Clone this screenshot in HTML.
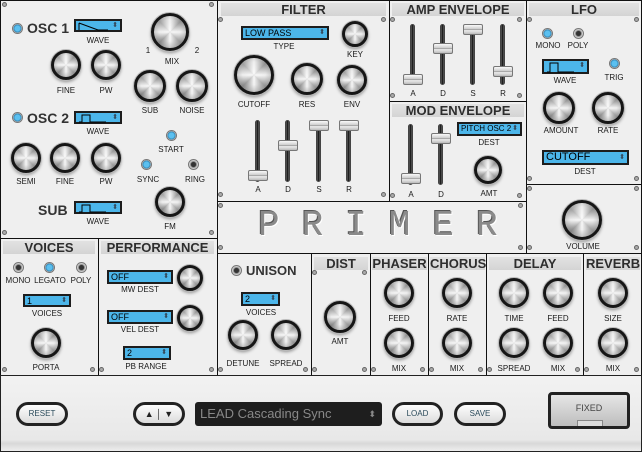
<!DOCTYPE html>
<html><head><meta charset="utf-8">
<style>
*{margin:0;padding:0;box-sizing:border-box}
body{width:642px;height:452px;background:#111;position:relative;overflow:hidden;font-family:"Liberation Sans",Arial,sans-serif}
.p{position:absolute;background:#efefef;border:1px solid #111}
.h{position:absolute;height:13px;background:linear-gradient(#e2e2e2,#d4d4d4);font-weight:bold;font-size:13px;color:#2e2e2e;text-align:center;line-height:13px}
.l{position:absolute;font-size:8px;color:#1a1a1a;transform:translateX(-50%);white-space:nowrap;line-height:9px}
.k{position:absolute;border-radius:50%;border:3px solid #161616;background:radial-gradient(circle at 50% 45%,rgba(255,255,255,.85) 0,rgba(255,255,255,.15) 45%,rgba(0,0,0,.25) 85%),conic-gradient(#eee,#8f8f8f,#eee,#a0a0a0,#f2f2f2,#909090,#eee,#a0a0a0,#eee);box-shadow:0 0 0 1px #bbb,0 2px 3px rgba(0,0,0,.4)}
.s{position:absolute;background:linear-gradient(90deg,#666,#111,#666);width:5px;border-radius:3px;border:1px solid #444}
.hd{position:absolute;width:20px;height:11px;border-radius:2px;background:linear-gradient(#fafafa,#ccc 45%,#888 50%,#eee 60%,#bbb);border:1px solid #777}
.b{position:absolute;background:#4cb6ea;border:2px solid #1d1d1d;font-size:9px;color:#000;line-height:10px;padding-left:2px}
.b:after{content:"⬍";position:absolute;right:2px;top:0;font-size:7px;color:#345}
.led{position:absolute;width:11px;height:11px;border-radius:50%;background:radial-gradient(circle,#5bc0f0 40%,#2a7fb0 60%,#ccc 65%,#888);border:1px solid #777}
.off{background:radial-gradient(circle,#333 35%,#888 45%,#ddd 65%,#888)}
.sc{position:absolute;width:5px;height:5px;border-radius:50%;background:#aaa;border:1px solid #666}
.btn{position:absolute;border:3px solid #222;border-radius:12px;background:linear-gradient(#fdfdfd,#dcdcdc);font-size:8px;color:#2a4a5a;text-align:center;line-height:18px}
</style></head><body>
<div class="p" style="left:0;top:0;width:218px;height:239px"></div>
<div class="p" style="left:217px;top:0;width:173px;height:202px"></div>
<div class="p" style="left:389px;top:0;width:138px;height:102px"></div>
<div class="p" style="left:389px;top:101px;width:138px;height:101px"></div>
<div class="p" style="left:526px;top:0;width:116px;height:185px"></div>
<div class="p" style="left:526px;top:184px;width:116px;height:70px"></div>
<div class="p" style="left:217px;top:201px;width:310px;height:53px"></div>
<div class="p" style="left:0;top:238px;width:99px;height:138px"></div>
<div class="p" style="left:98px;top:238px;width:120px;height:138px"></div>
<div class="p" style="left:217px;top:253px;width:95px;height:123px"></div>
<div class="p" style="left:311px;top:253px;width:60px;height:123px"></div>
<div class="p" style="left:370px;top:253px;width:59px;height:123px"></div>
<div class="p" style="left:428px;top:253px;width:59px;height:123px"></div>
<div class="p" style="left:486px;top:253px;width:98px;height:123px"></div>
<div class="p" style="left:583px;top:253px;width:59px;height:123px"></div>
<div style="position:absolute;left:0;top:375px;width:642px;height:77px;background:linear-gradient(#f2f2f2,#e8e8e8 85%,#d8d8d8 90%,#eee);border:1px solid #222"></div>

<div class="h" style="left:221px;top:3px;width:165px">FILTER</div>
<div class="h" style="left:392px;top:3px;width:132px">AMP ENVELOPE</div>
<div class="h" style="left:392px;top:104px;width:132px">MOD ENVELOPE</div>
<div class="h" style="left:529px;top:3px;width:110px">LFO</div>
<div class="h" style="left:3px;top:241px;width:92px">VOICES</div>
<div class="h" style="left:101px;top:241px;width:113px">PERFORMANCE</div>
<div class="h" style="left:314px;top:257px;width:54px">DIST</div>
<div class="h" style="left:372px;top:257px;width:55px">PHASER</div>
<div class="h" style="left:430px;top:257px;width:55px">CHORUS</div>
<div class="h" style="left:489px;top:257px;width:92px">DELAY</div>
<div class="h" style="left:586px;top:257px;width:54px">REVERB</div>

<div style="position:absolute;left:27px;top:20px;font-weight:bold;font-size:14px;color:#333">OSC 1</div>
<div style="position:absolute;left:27px;top:110px;font-weight:bold;font-size:14px;color:#333">OSC 2</div>
<div style="position:absolute;left:38px;top:202px;font-weight:bold;font-size:14px;color:#333">SUB</div>
<div style="position:absolute;left:246px;top:263px;font-weight:bold;font-size:13px;color:#333">UNISON</div>

<div class="b" style="left:74px;top:19px;width:48px;height:13px"><svg width="30" height="9" style="position:absolute;left:2px;top:1px"><path d="M1 1 L1 8 M1 1 L20 8 L30 8" stroke="#000" fill="none"/></svg></div>
<div class="b" style="left:74px;top:111px;width:48px;height:13px"><svg width="30" height="9" style="position:absolute;left:2px;top:1px"><path d="M1 8 L4 8 L4 1 L12 1 L12 8 L28 8" stroke="#000" fill="none"/></svg></div>
<div class="b" style="left:74px;top:201px;width:48px;height:13px"><svg width="30" height="9" style="position:absolute;left:2px;top:1px"><path d="M1 8 L4 8 L4 1 L12 1 L12 8 L28 8" stroke="#000" fill="none"/></svg></div>
<div class="b" style="left:542px;top:59px;width:47px;height:15px"><svg width="30" height="11" style="position:absolute;left:2px;top:1px"><path d="M1 10 L4 10 L4 1 L12 1 L12 10 L28 10" stroke="#000" fill="none"/></svg></div>
<div class="b" style="left:241px;top:26px;width:88px;height:14px">LOW PASS</div>
<div class="b" style="left:457px;top:122px;width:65px;height:14px;font-size:8px">PITCH OSC 2</div>
<div class="b" style="left:542px;top:150px;width:87px;height:15px;font-size:11px;line-height:11px">CUTOFF</div>
<div class="b" style="left:23px;top:294px;width:48px;height:13px">1</div>
<div class="b" style="left:107px;top:270px;width:66px;height:14px">OFF</div>
<div class="b" style="left:107px;top:310px;width:66px;height:14px">OFF</div>
<div class="b" style="left:123px;top:346px;width:48px;height:14px">2</div>
<div class="b" style="left:241px;top:292px;width:39px;height:14px">2</div>

<div class="l" style="left:98px;top:36px">WAVE</div>
<div class="l" style="left:98px;top:127px">WAVE</div>
<div class="l" style="left:98px;top:217px">WAVE</div>
<div class="l" style="left:66px;top:86px">FINE</div>
<div class="l" style="left:106px;top:86px">PW</div>
<div class="l" style="left:148px;top:46px">1</div>
<div class="l" style="left:197px;top:46px">2</div>
<div class="l" style="left:172px;top:57px">MIX</div>
<div class="l" style="left:150px;top:106px">SUB</div>
<div class="l" style="left:192px;top:106px">NOISE</div>
<div class="l" style="left:26px;top:177px">SEMI</div>
<div class="l" style="left:65px;top:177px">FINE</div>
<div class="l" style="left:106px;top:177px">PW</div>
<div class="l" style="left:171px;top:145px">START</div>
<div class="l" style="left:148px;top:175px">SYNC</div>
<div class="l" style="left:195px;top:175px">RING</div>
<div class="l" style="left:170px;top:222px">FM</div>
<div class="l" style="left:284px;top:42px">TYPE</div>
<div class="l" style="left:355px;top:50px">KEY</div>
<div class="l" style="left:254px;top:100px">CUTOFF</div>
<div class="l" style="left:307px;top:100px">RES</div>
<div class="l" style="left:352px;top:100px">ENV</div>
<div class="l" style="left:258px;top:185px">A</div><div class="l" style="left:288px;top:185px">D</div><div class="l" style="left:319px;top:185px">S</div><div class="l" style="left:349px;top:185px">R</div>
<div class="l" style="left:413px;top:89px">A</div><div class="l" style="left:443px;top:89px">D</div><div class="l" style="left:473px;top:89px">S</div><div class="l" style="left:503px;top:89px">R</div>
<div class="l" style="left:411px;top:190px">A</div><div class="l" style="left:441px;top:190px">D</div>
<div class="l" style="left:489px;top:138px">DEST</div>
<div class="l" style="left:489px;top:189px">AMT</div>
<div class="l" style="left:548px;top:41px">MONO</div>
<div class="l" style="left:578px;top:41px">POLY</div>
<div class="l" style="left:565px;top:76px">WAVE</div>
<div class="l" style="left:614px;top:73px">TRIG</div>
<div class="l" style="left:561px;top:126px">AMOUNT</div>
<div class="l" style="left:608px;top:126px">RATE</div>
<div class="l" style="left:585px;top:167px">DEST</div>
<div class="l" style="left:583px;top:242px">VOLUME</div>
<div class="l" style="left:18px;top:276px">MONO</div>
<div class="l" style="left:50px;top:276px">LEGATO</div>
<div class="l" style="left:81px;top:276px">POLY</div>
<div class="l" style="left:47px;top:309px">VOICES</div>
<div class="l" style="left:46px;top:363px">PORTA</div>
<div class="l" style="left:140px;top:285px">MW DEST</div>
<div class="l" style="left:140px;top:325px">VEL DEST</div>
<div class="l" style="left:146px;top:362px">PB RANGE</div>
<div class="l" style="left:261px;top:308px">VOICES</div>
<div class="l" style="left:243px;top:359px">DETUNE</div>
<div class="l" style="left:286px;top:359px">SPREAD</div>
<div class="l" style="left:340px;top:337px">AMT</div>
<div class="l" style="left:399px;top:314px">FEED</div><div class="l" style="left:399px;top:364px">MIX</div>
<div class="l" style="left:457px;top:314px">RATE</div><div class="l" style="left:457px;top:364px">MIX</div>
<div class="l" style="left:514px;top:314px">TIME</div><div class="l" style="left:558px;top:314px">FEED</div>
<div class="l" style="left:514px;top:364px">SPREAD</div><div class="l" style="left:558px;top:364px">MIX</div>
<div class="l" style="left:613px;top:314px">SIZE</div><div class="l" style="left:613px;top:364px">MIX</div>

<div style="position:absolute;left:258px;top:205px;font-family:'Liberation Mono',monospace;font-size:36px;letter-spacing:22px;color:#8a8a8a;text-shadow:1px 1px 0 #fff,-1px -1px 0 #555">PRIMER</div>

<div class="btn" style="left:16px;top:402px;width:52px;height:24px">RESET</div>
<div class="btn" style="left:133px;top:402px;width:52px;height:24px;font-size:9px;color:#222">▲ │ ▼</div>
<div style="position:absolute;left:195px;top:402px;width:187px;height:24px;background:#1e1e1e;border-radius:3px;color:#888;font-size:13px;line-height:24px;padding-left:5px">LEAD Cascading Sync<span style="position:absolute;right:6px;font-size:9px">⬍</span></div>
<div class="btn" style="left:392px;top:402px;width:51px;height:24px">LOAD</div>
<div class="btn" style="left:454px;top:402px;width:52px;height:24px">SAVE</div>
<div style="position:absolute;left:548px;top:392px;width:82px;height:37px;border:3px solid #222;border-radius:4px;background:linear-gradient(#e6e6e6,#bdbdbd);font-size:9px;color:#444;text-align:center;line-height:26px">FIXED<div style="position:absolute;left:26px;bottom:0;width:26px;height:6px;background:#ddd;border:1px solid #888;border-bottom:none"></div></div>

<script>
function K(cx,cy,d){var e=document.createElement('div');e.className='k';e.style.cssText='left:'+(cx-d/2)+'px;top:'+(cy-d/2)+'px;width:'+d+'px;height:'+d+'px';document.body.appendChild(e);}
[[66,65,30],[106,65,30],[170,32,38],[150,86,32],[192,86,32],[26,158,30],[65,158,30],[106,158,30],[170,202,30],
[254,75,40],[307,79,32],[352,80,30],[355,34,26],[488,170,28],[559,108,32],[608,108,32],[582,220,40],
[46,343,30],[190,278,26],[190,318,26],[243,335,30],[286,335,30],[340,317,32],
[399,293,30],[399,343,30],[457,293,30],[457,343,30],[514,293,30],[558,293,30],[514,343,30],[558,343,30],[613,293,30],[613,343,30]].forEach(function(k){K(k[0],k[1],k[2])});
function S(x,t,b,h){var e=document.createElement('div');e.className='s';e.style.cssText='left:'+(x-3)+'px;top:'+t+'px;height:'+(b-t)+'px';document.body.appendChild(e);var g=document.createElement('div');g.className='hd';g.style.cssText='left:'+(x-10)+'px;top:'+(h-5)+'px';document.body.appendChild(g);}
S(258,120,182,175);S(288,120,182,145);S(319,120,182,125);S(349,120,182,125);
S(413,24,85,79);S(443,24,85,48);S(473,24,85,29);S(503,24,85,71);
S(411,124,185,178);S(441,124,185,138);
function L(x,y,o){var e=document.createElement('div');e.className='led'+(o?' off':'');e.style.cssText='left:'+(x-5)+'px;top:'+(y-5)+'px';document.body.appendChild(e);}
L(17,28);L(17,117);L(171,135);L(146,164);L(193,164,1);L(547,33);L(578,33,1);L(614,63);L(18,267,1);L(49,267);L(81,267,1);L(236,270,1);
[[4,4],[211,4],[4,232],[211,232],[220,19],[383,19],[220,194],[383,194],[392,19],[519,19],[392,95],[519,95],[392,195],[519,195],[529,19],[636,19],[529,178],[636,178],[529,188],[636,188],[529,247],[636,247],[220,205],[520,205],[220,247],[520,247],[4,369],[92,369],[101,369],[211,369],[220,369],[305,369],[314,272],[364,272],[314,369],[364,369],[373,369],[422,369],[431,369],[480,369],[489,369],[577,369],[586,369],[636,369]].forEach(function(p){var e=document.createElement('div');e.className='sc';e.style.cssText='left:'+(p[0]-2)+'px;top:'+(p[1]-2)+'px';document.body.appendChild(e);});
</script>
</body></html>
